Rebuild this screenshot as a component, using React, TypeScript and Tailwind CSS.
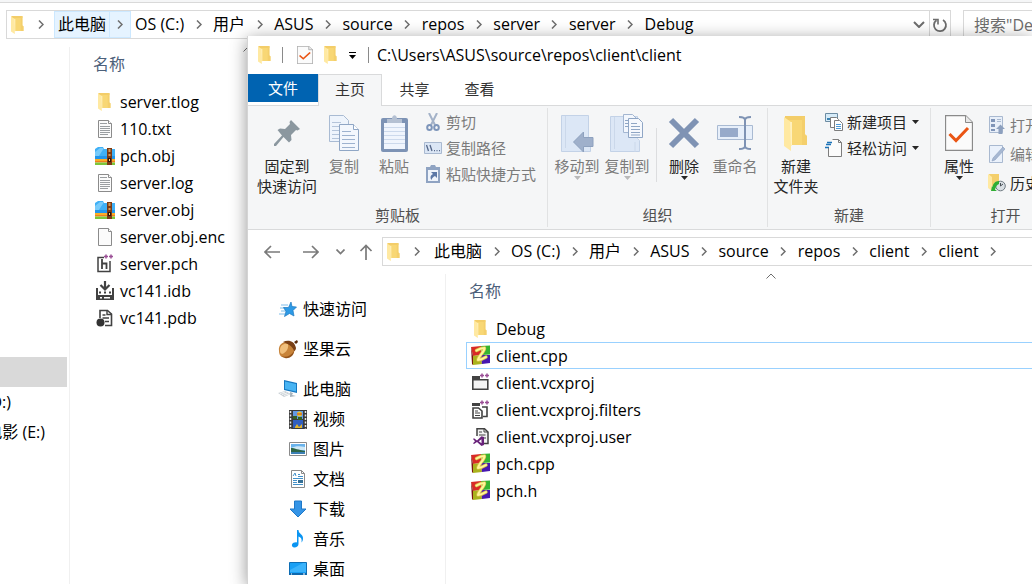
import { Fragment, ReactNode } from "react";
import clsx from "clsx";

const FolderIcon = ({ className = "h-[18px] w-[13px]" }: { className?: string }) => (
  <svg viewBox="0 0 24 35" preserveAspectRatio="none" className={className}>
    <path d="M1 0h20v18l2 2v9H6z" fill="#f8d775" />
    <path d="M1 0h20v4H1z" fill="#f3cd69" />
    <path d="M18 1h3v18l2 1v9h-5z" fill="#f4cf6c" />
    <path d="M0 1l7 5v29l-7-5z" fill="#ffe9a2" />
    <path d="M6 6h2v24H7z" fill="#fff1bf" />
  </svg>
);

const TextFileIcon = ({ blank }: { blank?: boolean }) => (
  <svg viewBox="0 0 16 20" className="h-5 w-4">
    <path d="M1.500 1.500h10l3 3v14h-13z" fill="#fbfbfb" stroke="#8b8b8b" />
    <path d="M11.500 1.500v3h3" fill="#fff" stroke="#8b8b8b" />
    {!blank && (
      <path d="M3 4.500h7M3 7.500h10M3 9.500h10M3 11.500h10M3 13.500h10M3 15.500h8" stroke="#8f9396" strokeWidth=".9" />
    )}
  </svg>
);

const ArchiveIcon = () => (
  <svg viewBox="0 0 20 18" className="h-[18px] w-5">
    <path d="M0 2l3-2h5l1 2h11v11H0z" fill="#3fb0f6" />
    <path d="M0 5L5 1h4L2 12H0z" fill="#77cbfb" />
    <path d="M0 9h20v4H0z" fill="#2196ec" />
    <path d="M0 12h20v2H0z" fill="#fbae26" />
    <path d="M0 14h20v1.500H0z" fill="#f07f1d" />
    <path d="M0 15.500h20V18H0z" fill="#7cc63a" />
    <path d="M12 1h5v17h-5z" fill="#7b3a14" />
    <path d="M13.500 2h2v3h-2zM13.500 7h2v2h-2z" fill="#d79a55" />
    <path d="M13 11h3v4h-3z" fill="#2e1508" />
    <path d="M14 12h1v2h-1z" fill="#ffd27a" />
  </svg>
);

const PlusPlus = () => (
  <path d="M9 2.500h4M11 .5v4M14 2.500h4M16 .5v4" stroke="#9b4f96" strokeWidth="1.500" />
);

const PchIcon = () => (
  <svg viewBox="0 0 19 20" className="h-5 w-[19px]" fill="none">
    <path d="M9 3.500H3v14h12V7" stroke="#424242" strokeWidth="1.500" />
    <path d="M7 5v10M7 9.500h4.500V15" stroke="#424242" strokeWidth="1.800" />
    <PlusPlus />
  </svg>
);

const IdbIcon = () => (
  <svg viewBox="0 0 20 20" className="h-5 w-5" fill="none">
    <path d="M10 0v7M5.500 4L10 8.500 14.500 4" stroke="#424242" strokeWidth="2.200" />
    <path d="M2 7v11h16V7" stroke="#424242" strokeWidth="2" />
    <path d="M1 14h18v5H1z" fill="#424242" />
    <path d="M4 10.500h2v2H4zM9 10.500h2v2H9zM14 10.500h2v2h-2z" fill="#424242" />
    <path d="M5 16h2v1.500H5zM9 16h6v1.500H9z" fill="#fff" />
  </svg>
);

const PdbIcon = () => (
  <svg viewBox="0 0 18 20" className="h-5 w-[18px]" fill="none">
    <path d="M4 10V2.500h7.500L15.500 6v11.500H9" stroke="#424242" strokeWidth="1.600" />
    <path d="M11 2v4.500h5M6.500 7h3M6.500 10h6.500M9 13.500h4" stroke="#424242" strokeWidth="1.400" />
    <circle cx="4.500" cy="14.500" r="4" fill="#333" />
  </svg>
);

const SourceIcon = () => (
  <svg viewBox="0 0 20 21" className="h-[21px] w-5">
    <path d="M0 2l10-1v9L2 11z" fill="#d92a26" />
    <path d="M10 1l9-.500v9L11 10z" fill="#36b432" />
    <path d="M1 11l9-1 1 9-9 1z" fill="#aab31e" />
    <path d="M10 10h9v8l-8 1z" fill="#4718b0" />
    <path d="M0 2l2 9v9l-1-1z" fill="#7a1512" />
    <path
      d="M5.500 5.500C8 4 11 3 13.500 3c.5 1.500-1.500 4-3.500 6.500-1.500 2-3 4-3 5.500 3-.3 5.500-1.500 8-3"
      fill="none"
      stroke="#d9c04a"
      strokeWidth="3.400"
      strokeLinejoin="round"
      strokeLinecap="round"
    />
    <path
      d="M5.500 5.500C8 4 11 3 13.500 3c.5 1.500-1.500 4-3.500 6.500-1.500 2-3 4-3 5.500 3-.3 5.500-1.500 8-3"
      fill="none"
      stroke="#fff79a"
      strokeWidth="2"
      strokeLinejoin="round"
      strokeLinecap="round"
    />
  </svg>
);

const ProjectIcon = () => (
  <svg viewBox="0 0 19 20" className="h-5 w-[19px]" fill="none">
    <path d="M1 3h8v4H1z" fill="#424242" />
    <path d="M1.800 6.800h15v9.500h-15z" fill="#f4f4f4" stroke="#424242" strokeWidth="1.600" />
    <PlusPlus />
  </svg>
);

const FiltersIcon = () => (
  <svg viewBox="0 0 19 20" className="h-5 w-[19px]" fill="none">
    <path d="M1 3h8v3H1z" fill="#424242" />
    <path d="M11 7h5v9.500h-4" stroke="#424242" strokeWidth="1.600" />
    <path d="M2 8h5.500L11 11v7H2z" fill="#fff" stroke="#424242" strokeWidth="1.600" />
    <path d="M4 11h3M4 13h5M4 15.500h5" stroke="#424242" />
    <PlusPlus />
  </svg>
);

const UserProjectIcon = () => (
  <svg viewBox="0 0 18 20" className="h-5 w-[18px]" fill="none">
    <path d="M5 9V1.800h7.500L16 5v11.500h-4" fill="#f4f4f4" stroke="#424242" strokeWidth="1.500" />
    <path d="M7 5h3M7 8h6.500M12 11h2M12 1.500V5h4" stroke="#424242" />
    <path d="M1 12l1-.8 3 2.400 4.500-4.400L12 10v8l-2.500 1L5 15l-3 2-1-.7 2-2.100zM9.500 12.200L6.700 14.200l2.800 2z" fill="#68217a" fillRule="evenodd" />
  </svg>
);

const StarIcon = () => (
  <svg viewBox="0 0 20 17" className="h-[17px] w-5">
    <path d="M3 4h7M2 7h5M3 10h5M1 13h6" stroke="#7fbdea" />
    <path d="M13 1l1 4.500 4.500.500-3.500 3.500 1 5.500-4.500-2.500L6.500 15.500l1.500-5-2.500-4h5z" fill="#2d9ae6" stroke="#1d78c0" strokeWidth=".7" />
  </svg>
);

const NutIcon = () => (
  <svg viewBox="0 0 20 20" className="h-5 w-5">
    <path d="M1 12C0 5 6 2 12 3c5 2 6 8 3 12-3 4-8 4-11 3-2-1-3-3-3-6z" fill="#c8843a" />
    <path d="M2 11C2 6 6 4 10 5c1 4-2 9-6 10-2-1-2-2-2-4z" fill="#f0bf7c" />
    <path d="M5 3c5-3 12-1 13 6 0 1-1 3-2 3-1-4-5-7-11-9z" fill="#7a4016" />
    <path d="M16 3l3-2 1 2-2 2z" fill="#5b2c0c" />
    <path d="M3 17c5 2 10 0 13-5 0 5-5 8-9 7z" fill="#94541c" />
  </svg>
);

const ComputerIcon = () => (
  <svg viewBox="0 0 20 18" className="h-[18px] w-5">
    <path d="M6 0l13 3v10L6 10z" fill="#1778c0" />
    <path d="M7 1.500l11 2.500v7.500L7 9z" fill="#48b4f3" />
    <path d="M12 12l3 1-1 2 4 1-6 1z" fill="#a8b4bd" />
    <path d="M0 13l7-2 6 3-7 3z" fill="#c9d0d5" />
    <path d="M2 13.500l5-1.500M4 14.500l5-1.500M6 15.500l5-1.500" stroke="#f2f4f5" />
  </svg>
);

const VideoIcon = () => (
  <svg viewBox="0 0 18 19" className="h-[19px] w-[18px]">
    <path d="M0 0h18v19H0z" fill="#3a3a3a" />
    <path d="M1.500 1v18M16.500 1v18" stroke="#e8e8e8" strokeWidth="1.500" strokeDasharray="2 1.500" />
    <path d="M4 1h10v8H4z" fill="#6399e4" />
    <path d="M4 10h10v8H4z" fill="#315fc0" />
    <circle cx="10.500" cy="4" r="2.500" fill="#e5c72b" />
    <path d="M8 3.500h5v1H8z" fill="#d33b25" />
    <path d="M4 6h4v3H4zM9 7h4v3H9z" fill="#345f21" />
    <path d="M6 17l2-3 2 3 3-3v4H6z" fill="#e3b52a" />
  </svg>
);

const PictureIcon = () => (
  <svg viewBox="0 0 18 14" className="h-3.5 w-[18px]">
    <path d="M.5.500h17v13H.5z" fill="#fff" stroke="#8a8a8a" />
    <path d="M2 2h14v10H2z" fill="#6ab3ec" />
    <path d="M2 6c4-2 9-2 14-1v3H2z" fill="#cfe8f6" />
    <path d="M2 6c4 0 7 2 14 3v1H2z" fill="#2e6546" />
    <path d="M2 10h14v2H2z" fill="#3b7fb4" />
  </svg>
);

const DocumentIcon = () => (
  <svg viewBox="0 0 16 18" className="h-[18px] w-4">
    <path d="M1.500.500h10l3 3v14h-13z" fill="#fff" stroke="#8b8b8b" />
    <path d="M11.500.500v3h3" fill="none" stroke="#8b8b8b" />
    <path d="M3 6l2-3 1 3M8 4.500h2M8 6.500h5M3 8.500h10M3 10.500h4M3 12.500h4M3 14.500h10" fill="none" stroke="#4391c9" />
    <path d="M8 10h5v3H8z" fill="#356f95" />
  </svg>
);

const DownloadIcon = () => (
  <svg viewBox="0 0 18 18" className="h-[18px] w-[18px]">
    <path d="M5.500 1h7v8H17l-8 8-8-8h4.500z" fill="#3494e6" stroke="#1e78c8" />
  </svg>
);

const MusicIcon = () => (
  <svg viewBox="0 0 18 18" className="h-[18px] w-[18px]">
    <path d="M8 0h1.500c0 4 5 4 4.500 9-.2 2-1 3-1.500 3.500.500-3 0-5-3-6V14c0 2-2 3.500-4 3.500s-3-1.500-2.500-3S6 12 8 12.500z" fill="#0a95f2" />
  </svg>
);

const DesktopIcon = () => (
  <svg viewBox="0 0 18 14" className="h-3.5 w-[18px]">
    <path d="M.5.500h17v12H.5z" fill="#19a0f5" stroke="#0d6eb5" />
    <path d="M1 8L14 1h3v9H1z" fill="#3bb3fb" />
    <path d="M0 11h18v2H0z" fill="#0e68ad" />
    <path d="M2 12h1M14 12h2" stroke="#fff" />
  </svg>
);

const CheckDocIcon = ({ className = "h-[18px] w-4" }: { className?: string }) => (
  <svg viewBox="0 0 28 36" preserveAspectRatio="none" className={className} fill="none">
    <path d="M.5.500h20l7 7v28H.5z" fill="#fbfbfb" stroke="#8a8a8a" strokeWidth="1.300" />
    <path d="M20.500.500v7h7" fill="#e8e8e8" stroke="#8a8a8a" />
    <path d="M4.500 19l6.500 6.500L23 13" stroke="#ea5514" strokeWidth="3" />
  </svg>
);

const PinIcon = () => (
  <svg viewBox="0 0 26 26" className="h-[26px] w-[26px]">
    <path d="M17 0l9 9-2.500 1.500-1.500-.5-5 5 .5 5-2.500 2.500L9.500 17 2 26H0v-2l8-8.500L3.500 10 6 8.500l5 .5 5-5-.5-2z" fill="#8b979f" />
  </svg>
);

const pageLines = "M3 7.500h9M3 11.500h13M3 15.500h13M3 19.500h13M3 23.500h13";

const CopyIcon = () => (
  <svg viewBox="0 0 31 37" className="h-[37px] w-[31px]">
    <path d="M.5.500h14l5 5v21H.5z" fill="#eef4fc" stroke="#a9bbd3" />
    <path d={pageLines} stroke="#b4c4da" />
    <g transform="translate(10 9)">
      <path d="M.5.500h14l5 5v21H.5z" fill="#f3f7fd" stroke="#8fa6c5" />
      <path d="M14.500.500v5h5" fill="#fff" stroke="#8fa6c5" />
      <path d={pageLines} stroke="#9db2cf" />
    </g>
  </svg>
);

const PasteIcon = () => (
  <svg viewBox="0 0 27 37" className="h-[37px] w-[27px]">
    <rect y="3" width="27" height="34" rx="2" fill="#7d93b5" />
    <path d="M3 8h21v26H3z" fill="#f0f5fd" />
    <path d="M3 12.500h21M3 16.500h21M3 20.500h21M3 24.500h21M3 28.500h21" stroke="#ccd9ec" />
    <path d="M6 4h5c0-5 5-5 5 0h5v4H6z" fill="#b4c0d2" />
  </svg>
);

const ScissorsIcon = () => (
  <svg viewBox="0 0 14 18" className="h-[18px] w-3.5" fill="none">
    <path d="M3 0l6 12M11 0L5 12" stroke="#a3b2c8" strokeWidth="2" />
    <ellipse cx="3.500" cy="14.500" rx="2.300" ry="2.500" stroke="#7d95ba" strokeWidth="2" />
    <ellipse cx="10.500" cy="14.500" rx="2.300" ry="2.500" stroke="#7d95ba" strokeWidth="2" />
  </svg>
);

const PathIcon = () => (
  <svg viewBox="0 0 18 12" className="h-3 w-[18px]">
    <path d="M.5.500h17v11H.5z" fill="#dbe6f5" stroke="#a9b9d0" />
    <path d="M2.500 3l2 6M6 3l2 6" stroke="#56688a" strokeWidth="1.300" />
    <path d="M10 8h1v1.200h-1zM12.500 8h1v1.200h-1zM15 8h1v1.200h-1z" fill="#56688a" />
  </svg>
);

const ShortcutIcon = () => (
  <svg viewBox="0 0 14 18" className="h-[18px] w-3.5">
    <path d="M0 2h4l1-2h4l1 2h4v16H0z" fill="#8fa3c2" />
    <path d="M2 5h10v11H2z" fill="#eff4fb" />
    <path d="M5 7h6v6L9 11c-2 1-3 2-3.500 4-2-3-.5-5 1.500-6z" fill="#5c78a6" />
  </svg>
);

const MoveToIcon = () => (
  <svg viewBox="0 0 33 37" className="h-[37px] w-[33px]">
    <path d="M.5.500h27v22l2 2v12H.5z" fill="#dce7f6" stroke="#c3d2e7" />
    <path d="M4.500 1v32" stroke="#cbd8ea" />
    <path d="M32 22.500H22.500V17L12.500 27l10 10v-5.500H32z" fill="#9fb0cb" stroke="#8ea1be" />
  </svg>
);

const CopyToIcon = () => (
  <svg viewBox="0 0 34 38" className="h-[38px] w-[34px]">
    <path d="M.5 2.500h27v22l2 2v11H.5z" fill="#dce7f6" stroke="#c3d2e7" />
    <path d="M4.500 3v32M25 28v10" stroke="#cbd8ea" />
    <path d="M13.500.500h9l4 4v14h-13z" fill="#f3f7fd" stroke="#a3b6d1" />
    <path d="M18.500 4.500h10l4 4v15h-14z" fill="#f5f8fd" stroke="#8fa6c5" />
    <path d="M15 6.500h3M15 9.500h3M15 12.500h3M21 9.500h6M21 12.500h9M21 15.500h9M21 18.500h9M21 21h9" stroke="#8fa6c5" />
  </svg>
);

const DeleteIcon = () => (
  <svg viewBox="0 0 32 32" className="h-8 w-8">
    <path d="M3 3l26 26M29 3L3 29" stroke="#7f93b4" strokeWidth="6" />
  </svg>
);

const RenameIcon = () => (
  <svg viewBox="0 0 36 34" className="h-[34px] w-9" fill="none">
    <path d="M.5 9.500h35v14H.5z" fill="#e7effa" stroke="#a9bad2" />
    <path d="M3 12h18v9H3z" fill="#97aaca" />
    <path d="M22 1c4 0 6 1 6 3 0-2 2-3 6-3M28 3v28M22 33c4 0 6-1 6-3 0 2 2 3 6 3" stroke="#7f93b4" strokeWidth="2" />
  </svg>
);

const NewItemIcon = () => (
  <svg viewBox="0 0 18 18" className="h-[18px] w-[18px]">
    <path d="M.5.500h12v8H.5z" fill="#d6ebf8" stroke="#6c8ca3" />
    <path d="M2 5h9v2H2z" fill="#3b83b2" />
    <path d="M5.500 4.500h6l2 2v8h-8z" fill="#fff" stroke="#7d7d7d" />
    <path d="M9.500 7.500h5l3 3v7h-8z" fill="#fff" stroke="#7d7d7d" />
    <path d="M11 11.500h5M11 13.500h5M11 15.500h5" stroke="#4e9ad6" />
  </svg>
);

const EasyAccessIcon = () => (
  <svg viewBox="0 0 18 18" className="h-[18px] w-[18px]" fill="none">
    <path d="M3.500 9v8.500h13v-14l-3-3h-6" fill="#fbfbfb" stroke="#7d7d7d" />
    <path d="M13.500.500v3h3" stroke="#7d7d7d" />
    <path d="M2 3.500h5M1 5.500h5M0 8.500h4" stroke="#1c73b8" strokeWidth="1.300" />
  </svg>
);

const OpenIcon = () => (
  <svg viewBox="0 0 16 18" className="h-[18px] w-4">
    <path d="M.5.500h13v16H.5z" fill="#e8eff9" stroke="#a9b9d0" />
    <path d="M2 3h4v3H2zM2 8h4v3H2zM2 13h4v2H2z" fill="#8095b8" />
    <path d="M8 3.500h4M8 5.500h4" stroke="#a9b9d0" />
    <path d="M11.500 8.500L16 13h-2.500v5h-4v-5H7z" fill="#8da0be" />
  </svg>
);

const EditIcon = () => (
  <svg viewBox="0 0 16 18" className="h-[18px] w-4">
    <path d="M.5.500h13v17H.5z" fill="#eaf1fb" stroke="#a9b9d0" />
    <path d="M14 2l2 2L6 15l-3 1 1-3z" fill="#a7b8d2" stroke="#8ba0c0" strokeWidth=".6" />
  </svg>
);

const HistoryIcon = () => (
  <svg viewBox="0 0 18 18" className="h-[18px] w-[18px]">
    <path d="M1 0h10v12H4z" fill="#f4cf6c" />
    <path d="M0 0l4 3v14l-4-3z" fill="#ffe9a2" />
    <circle cx="12.500" cy="12" r="4.800" fill="#d9dfe4" stroke="#6f7a82" />
    <path d="M12.500 9v3l2.500-2" stroke="#4a5259" fill="none" />
    <path d="M4 12l-1 5h6l-2-1.500c1-3 2-5 4-5.500V7c-4 0-6 3-6.500 6z" fill="#2fae35" />
  </svg>
);

const Caret = ({ className }: { className?: string }) => (
  <svg viewBox="0 0 7 4" className={clsx("h-1 w-[7px] shrink-0", className)}>
    <path d="M0 0h7L3.500 4z" fill="currentColor" />
  </svg>
);

const Chevron = () => (
  <svg viewBox="0 0 6 9" className="h-[9px] w-1.5" fill="none">
    <path d="M1 .5l4 4-4 4" stroke="currentColor" strokeWidth="1.500" />
  </svg>
);

const SortMark = () => (
  <svg viewBox="0 0 10 6" className="h-1.5 w-2.5" fill="none">
    <path d="M.5 5.500L5 1l4.500 4.500" stroke="#6d6d6d" />
  </svg>
);

const Crumbs = ({ items, hovered }: { items: string[]; hovered?: boolean }) => (
  <>
    <FolderIcon />
    <span className="ml-1 flex w-[26px] shrink-0 justify-center text-[#6d6d6d]">
      <Chevron />
    </span>
    {items.map((item, index) => {
      const active = hovered && index === 0;
      return (
        <Fragment key={index}>
          <button
            className={clsx(
              "h-full shrink-0 whitespace-nowrap border px-[3px] pb-0.5",
              active ? "border-[#cce8ff] bg-[#e5f3ff]" : "border-transparent"
            )}
          >
            {item}
          </button>
          {(hovered ? index < items.length - 1 : true) && (
            <span
              className={clsx(
                "flex h-full w-[21px] shrink-0 items-center justify-center pb-px text-[#6d6d6d]",
                active && "border-y border-r border-[#cce8ff] bg-[#e5f3ff]"
              )}
            >
              <Chevron />
            </span>
          )}
        </Fragment>
      );
    })}
  </>
);

type FileEntry = { name: string; icon: ReactNode; selected?: boolean };

const FileList = ({ files }: { files: FileEntry[] }) => (
  <ul>
    {files.map((file) => (
      <li key={file.name}>
        <button
          className={clsx(
            "flex h-[27px] w-full items-center border",
            file.selected ? "border-[#99d1ff]" : "border-transparent"
          )}
        >
          <span className="mr-0.5 flex w-[27px] shrink-0 justify-center">{file.icon}</span>
          {file.name}
        </button>
      </li>
    ))}
  </ul>
);

type BigButtonProps = {
  icon: ReactNode;
  lines: string[];
  className: string;
  disabled?: boolean;
  menu?: boolean;
};

const BigButton = ({ icon, lines, className, disabled, menu }: BigButtonProps) => (
  <button
    disabled={disabled}
    className={clsx(
      "flex shrink-0 flex-col items-center whitespace-nowrap pt-1.5",
      disabled ? "text-[#7b7b7b]" : "text-[#262626]",
      className
    )}
  >
    <span className="mb-1 flex h-[38px] items-center justify-center">{icon}</span>
    {lines.map((line) => (
      <span key={line} className="leading-5">
        {line}
      </span>
    ))}
    {menu && <Caret className={disabled ? "text-[#b9b9b9]" : "text-[#262626]"} />}
  </button>
);

type SmallButtonProps = { icon: ReactNode; label: string; disabled?: boolean; menu?: boolean };

const SmallButton = ({ icon, label, disabled, menu }: SmallButtonProps) => (
  <button
    disabled={disabled}
    className={clsx(
      "flex h-[26px] items-center whitespace-nowrap",
      disabled ? "text-[#7b7b7b]" : "text-[#262626]"
    )}
  >
    <span className="mr-[3px] flex w-5 justify-center">{icon}</span>
    {label}
    {menu && <Caret className="ml-[5px]" />}
  </button>
);

const RibbonGroup = ({ title, className, children }: { title: string; className: string; children: ReactNode }) => (
  <section className={clsx("flex shrink-0 flex-col border-r border-[#e1e2e3]", className)}>
    <div className="flex h-[97px] items-start">{children}</div>
    <h2 className="text-center leading-5 text-[#505050]">{title}</h2>
  </section>
);

const serverFiles: FileEntry[] = [
  { name: "server.tlog", icon: <FolderIcon /> },
  { name: "110.txt", icon: <TextFileIcon /> },
  { name: "pch.obj", icon: <ArchiveIcon /> },
  { name: "server.log", icon: <TextFileIcon /> },
  { name: "server.obj", icon: <ArchiveIcon /> },
  { name: "server.obj.enc", icon: <TextFileIcon blank /> },
  { name: "server.pch", icon: <PchIcon /> },
  { name: "vc141.idb", icon: <IdbIcon /> },
  { name: "vc141.pdb", icon: <PdbIcon /> },
];

const clientFiles: FileEntry[] = [
  { name: "Debug", icon: <FolderIcon /> },
  { name: "client.cpp", icon: <SourceIcon />, selected: true },
  { name: "client.vcxproj", icon: <ProjectIcon /> },
  { name: "client.vcxproj.filters", icon: <FiltersIcon /> },
  { name: "client.vcxproj.user", icon: <UserProjectIcon /> },
  { name: "pch.cpp", icon: <SourceIcon /> },
  { name: "pch.h", icon: <SourceIcon /> },
];

const places = [
  { name: "快速访问", icon: <StarIcon /> },
  { name: "坚果云", icon: <NutIcon /> },
  { name: "此电脑", icon: <ComputerIcon /> },
];

const libraries = [
  { name: "视频", icon: <VideoIcon /> },
  { name: "图片", icon: <PictureIcon /> },
  { name: "文档", icon: <DocumentIcon /> },
  { name: "下载", icon: <DownloadIcon /> },
  { name: "音乐", icon: <MusicIcon /> },
  { name: "桌面", icon: <DesktopIcon /> },
];

const ServerWindow = () => (
  <div className="flex min-h-screen flex-col">
    <div className="h-[3px] border-b border-[#d9d9d9] bg-[#f5f6f7]" />
    <div className="mt-[7px] flex h-[29px] shrink-0 pl-1.5">
      <div className="flex min-w-0 flex-1 items-center border border-[#d9d9d9] pl-1">
        <Crumbs
          hovered
          items={["此电脑", "OS (C:)", "用户", "ASUS", "source", "repos", "server", "server", "Debug"]}
        />
        <button aria-label="历史" className="ml-auto flex h-full w-5 items-center justify-center">
          <svg viewBox="0 0 12 7" className="h-[7px] w-3" fill="none">
            <path d="M1 1l5 5 5-5" stroke="#6d6d6d" strokeWidth="2" />
          </svg>
        </button>
        <button aria-label="刷新" className="flex h-full w-[21px] items-center justify-center border-l border-[#d9d9d9]">
          <svg viewBox="0 0 16 16" className="h-4 w-4" fill="none">
            <path d="M11 3a6 6 0 1 1-6.500.3" stroke="#6d6d6d" strokeWidth="1.800" />
            <path d="M1 2.500h5v5" stroke="#6d6d6d" strokeWidth="1.600" />
          </svg>
        </button>
      </div>
      <input
        aria-label="搜索"
        placeholder='搜索"Debug"'
        className="ml-3 w-[69px] border border-r-0 border-[#d9d9d9] pl-2.5 outline-none placeholder:text-[#6d6d6d]"
      />
    </div>
    <div className="mt-2 flex flex-1">
      <nav className="w-[70px] shrink-0 border-r border-[#f0f0f0] pt-[310px]">
        <div className="mr-0.5 h-[30px] bg-[#d9d9d9]" />
        <a href="#d" className="flex h-[30px] w-[11px] items-center justify-end overflow-hidden whitespace-nowrap">
          (D:)
        </a>
        <a href="#e" className="flex h-[30px] w-[45px] items-center justify-end overflow-hidden whitespace-nowrap">
          电影 (E:)
        </a>
      </nav>
      <div className="w-[356px]">
        <button className="flex h-[41px] w-full flex-col items-start text-[#4c607a]">
          <span className="flex h-[5px] w-full items-end justify-center">
            <SortMark />
          </span>
          <span className="pl-[23px]">名称</span>
        </button>
        <div className="pl-5">
          <FileList files={serverFiles} />
        </div>
      </div>
    </div>
  </div>
);

const Ribbon = () => (
  <div className="flex h-[124px] overflow-hidden border-b border-[#d9dadb] bg-[#f5f6f7] py-0.5 text-[15px]">
    <RibbonGroup title="剪贴板" className="w-[300px]">
      <BigButton className="ml-1 w-[70px]" icon={<PinIcon />} lines={["固定到", "快速访问"]} />
      <BigButton className="w-11" icon={<CopyIcon />} lines={["复制"]} disabled />
      <BigButton className="w-14" icon={<PasteIcon />} lines={["粘贴"]} disabled />
      <div className="pl-px pt-px">
        <SmallButton icon={<ScissorsIcon />} label="剪切" disabled />
        <SmallButton icon={<PathIcon />} label="复制路径" disabled />
        <SmallButton icon={<ShortcutIcon />} label="粘贴快捷方式" disabled />
      </div>
    </RibbonGroup>
    <RibbonGroup title="组织" className="w-[220px]">
      <BigButton className="ml-1 w-[50px]" icon={<MoveToIcon />} lines={["移动到"]} disabled menu />
      <BigButton className="w-[50px]" icon={<CopyToIcon />} lines={["复制到"]} disabled menu />
      <div className="ml-1 mt-5 h-[54px] w-px bg-[#dcdddf]" />
      <BigButton className="w-[54px]" icon={<DeleteIcon />} lines={["删除"]} menu />
      <BigButton className="w-12" icon={<RenameIcon />} lines={["重命名"]} disabled />
    </RibbonGroup>
    <RibbonGroup title="新建" className="w-[163px]">
      <BigButton
        className="w-14"
        icon={<FolderIcon className="h-[35px] w-6" />}
        lines={["新建", "文件夹"]}
      />
      <div className="pt-px">
        <SmallButton icon={<NewItemIcon />} label="新建项目" menu />
        <SmallButton icon={<EasyAccessIcon />} label="轻松访问" menu />
      </div>
    </RibbonGroup>
    <RibbonGroup title="打开" className="w-[150px]">
      <BigButton
        className="w-14"
        icon={<CheckDocIcon className="h-9 w-7" />}
        lines={["属性"]}
        menu
      />
      <div className="flex flex-col gap-[3px] pt-1">
        <SmallButton icon={<OpenIcon />} label="打开" disabled />
        <SmallButton icon={<EditIcon />} label="编辑" disabled />
        <SmallButton icon={<HistoryIcon />} label="历史记录" />
      </div>
    </RibbonGroup>
  </div>
);

const ClientWindow = () => (
  <div className="absolute bottom-0 left-[247px] right-0 top-9 flex flex-col overflow-hidden border-l border-[#d4d4d4] bg-white shadow-[0_3px_16px_rgba(0,0,0,0.42)]">
    <header className="flex h-[38px] shrink-0 items-center pl-2.5">
      <FolderIcon />
      <span className="ml-[11px] h-4 w-px bg-[#8a8a8a]" />
      <button aria-label="属性" className="ml-3.5">
        <CheckDocIcon />
      </button>
      <button aria-label="新建文件夹" className="ml-[11px]">
        <FolderIcon />
      </button>
      <button aria-label="自定义快速访问工具栏" className="ml-3 flex flex-col items-center gap-0.5">
        <span className="h-px w-[7px] bg-black" />
        <Caret />
      </button>
      <span className="ml-3 h-4 w-px bg-[#8a8a8a]" />
      <h1 className="ml-2 whitespace-nowrap">C:\Users\ASUS\source\repos\client\client</h1>
    </header>
    <div className="flex h-8 shrink-0 text-[15px] text-[#333]">
      <div className="border-b border-[#d9dadb]">
        <button className="h-7 w-[70px] bg-[#0063b1] text-white">文件</button>
      </div>
      <button className="w-16 border-x border-t border-[#d9dadb] bg-[#f5f6f7] pb-1">主页</button>
      <div className="flex flex-1 border-b border-[#d9dadb]">
        <button className="w-[65px] pb-0.5">共享</button>
        <button className="w-[65px] pb-0.5">查看</button>
      </div>
    </div>
    <Ribbon />
    <div className="mt-[7px] flex h-[29px] shrink-0 items-stretch">
      <div className="flex w-[134px] shrink-0 items-center pl-4">
        <button aria-label="后退">
          <svg viewBox="0 0 16 14" className="h-3.5 w-4" fill="none">
            <path d="M16 7H1.500M7 1L1 7l6 6" stroke="#7a7a7a" strokeWidth="1.700" />
          </svg>
        </button>
        <button aria-label="前进" className="ml-[23px]">
          <svg viewBox="0 0 16 14" className="h-3.5 w-4" fill="none">
            <path d="M0 7h14.500M9 1l6 6-6 6" stroke="#7a7a7a" strokeWidth="1.700" />
          </svg>
        </button>
        <button aria-label="最近浏览的位置" className="ml-[17px]">
          <svg viewBox="0 0 9 6" className="h-1.5 w-[9px]" fill="none">
            <path d="M.5.500l4 4 4-4" stroke="#7a7a7a" strokeWidth="1.700" />
          </svg>
        </button>
        <button aria-label="上移" className="ml-3.5">
          <svg viewBox="0 0 14 16" className="h-4 w-3.5" fill="none">
            <path d="M7 16V1.500M1.500 7L7 1.500 12.500 7" stroke="#7a7a7a" strokeWidth="1.700" />
          </svg>
        </button>
      </div>
      <div className="flex min-w-0 flex-1 items-center overflow-hidden border border-r-0 border-[#d9d9d9] pl-1">
        <Crumbs items={["此电脑", "OS (C:)", "用户", "ASUS", "source", "repos", "client", "client"]} />
      </div>
    </div>
    <div className="mt-2 flex flex-1">
      <nav className="w-[198px] shrink-0 border-r border-[#f0f0f0] pt-5">
        <ul className="flex flex-col gap-2.5">
          {places.map((place) => (
            <li key={place.name}>
              <a href="#place" className="flex h-[30px] items-center pl-[30px]">
                <span className="mr-[5px] w-5">{place.icon}</span>
                {place.name}
              </a>
            </li>
          ))}
        </ul>
        <ul>
          {libraries.map((library) => (
            <li key={library.name}>
              <a href="#library" className="flex h-[30px] items-center pl-10">
                <span className="mr-[5px] flex w-5 justify-center">{library.icon}</span>
                {library.name}
              </a>
            </li>
          ))}
        </ul>
      </nav>
      <div className="min-w-0 flex-1 overflow-hidden">
        <button className="flex h-[41px] w-[650px] flex-col items-start text-[#4c607a]">
          <span className="flex h-[5px] w-full items-end justify-center">
            <SortMark />
          </span>
          <span className="pl-[23px]">名称</span>
        </button>
        <div className="-mr-px pl-5">
          <FileList files={clientFiles} />
        </div>
      </div>
    </div>
  </div>
);

const App = () => (
  <div className="relative h-screen overflow-hidden bg-white font-['Open_Sans','Noto_Sans_CJK_SC',sans-serif] text-base leading-6 text-black">
    <ServerWindow />
    <ClientWindow />
  </div>
);

export default App;
